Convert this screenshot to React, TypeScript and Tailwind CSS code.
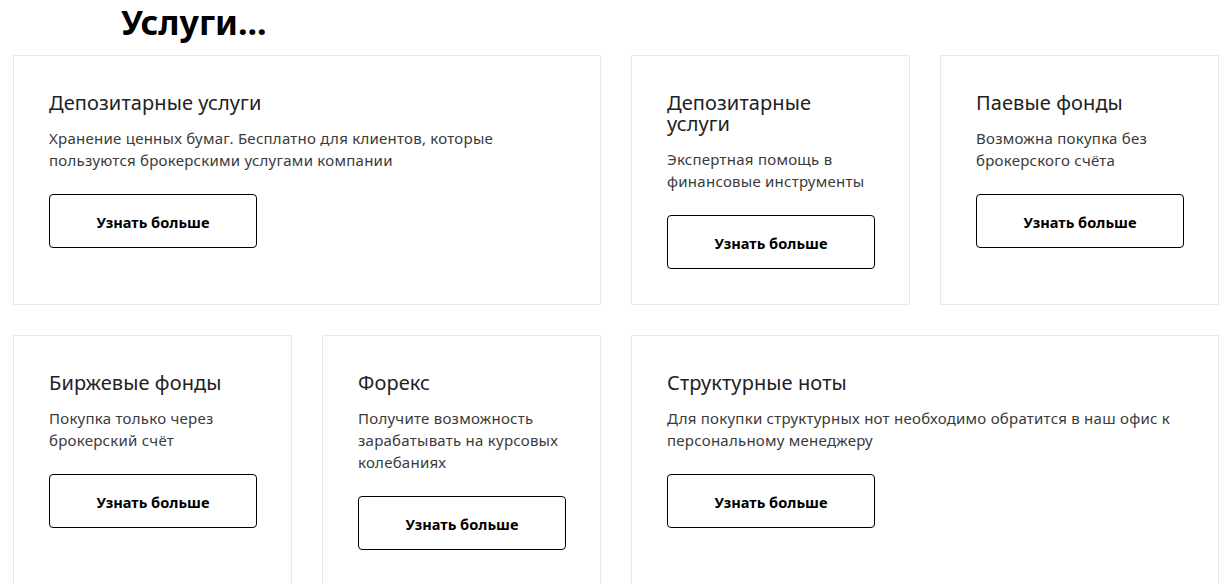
import React from "react";

type Card = { title: string; desc: string; span?: boolean };

const row1: Card[] = [
  { title: "Депозитарные услуги", desc: "Хранение ценных бумаг. Бесплатно для клиентов, которые пользуются брокерскими услугами компании", span: true },
  { title: "Депозитарные услуги", desc: "Экспертная помощь в финансовые инструменты" },
  { title: "Паевые фонды", desc: "Возможна покупка без брокерского счёта" },
];
const row2: Card[] = [
  { title: "Биржевые фонды", desc: "Покупка только через брокерский счёт" },
  { title: "Форекс", desc: "Получите возможность зарабатывать на курсовых колебаниях" },
  { title: "Структурные ноты", desc: "Для покупки структурных нот необходимо обратится в наш офис к персональному менеджеру", span: true },
];

function ServiceCard({ c }: { c: Card }) {
  return (
    <div className={`${c.span ? "col-span-2" : ""} border border-[#e6eaeb] bg-white pt-[36px] pb-[35px] pl-[35px] pr-[34px]`}>
      <h3 className="text-[20px] leading-[21px] tracking-[0.1px] text-[#222] font-normal">{c.title}</h3>
      <p className="mt-[14px] text-[15px] leading-[22px] tracking-[0.25px] text-[#3a3a3a]">{c.desc}</p>
      <button className="mt-[23px] h-[54px] w-[208px] rounded-[4px] border border-black bg-white pt-[3px] text-[14.6px] font-bold text-black">
        Узнать больше
      </button>
    </div>
  );
}

export default function App() {
  return (
    <div className="min-h-[584px] bg-white px-[13px]" style={{ fontFamily: '"Noto Sans", "Open Sans", sans-serif' }}>
      <h1 className="pl-[108px] text-[34px] leading-[44px] font-bold text-black">Услуги...</h1>
      <div className="mt-[11px] grid w-[1206px] grid-cols-4 gap-x-[30px] gap-y-[30px]">
        {row1.map((c, i) => (
          <ServiceCard key={"a" + i} c={c} />
        ))}
        {row2.map((c, i) => (
          <ServiceCard key={"b" + i} c={c} />
        ))}
      </div>
    </div>
  );
}
